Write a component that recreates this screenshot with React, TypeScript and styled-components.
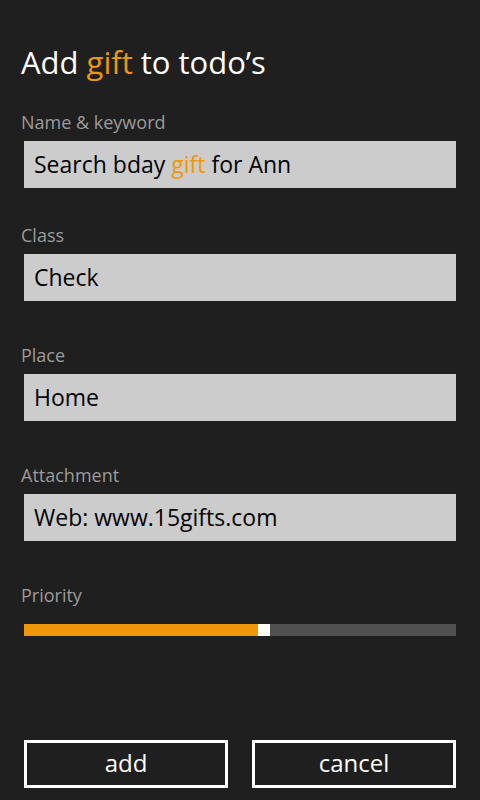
import React from 'react';
import styled, { createGlobalStyle } from 'styled-components';

const GlobalStyle = createGlobalStyle`
  html, body {
    margin: 0;
    padding: 0;
    background: #1f1f1f;
  }
  body {
    font-family: "Open Sans", "Noto Sans", sans-serif;
  }
`;

const Page = styled.div`
  width: 480px;
  height: 800px;
  box-sizing: border-box;
  background: #1f1f1f;
  padding: 44px 24px 12px;
  display: flex;
  flex-direction: column;
`;

const Title = styled.h1`
  margin: 0 0 0 -3px;
  font-size: 31px;
  line-height: 36px;
  font-weight: 400;
  color: #ffffff;
`;

const Accent = styled.span`
  color: #f09609;
`;

const Field = styled.div<{ $top: number }>`
  display: flex;
  flex-direction: column;
  margin-top: ${props => props.$top}px;
`;

const Label = styled.div`
  margin-left: -3px;
  font-size: 18px;
  line-height: 22px;
  color: #9b9b9b;
`;

const Input = styled.div`
  margin-top: 8px;
  height: 47px;
  box-sizing: border-box;
  background: #cccccc;
  padding: 0 10px;
  font-size: 23px;
  line-height: 46px;
  color: #000000;
  white-space: nowrap;
`;

const Slider = styled.div`
  margin-top: 18px;
  height: 12px;
  display: flex;
  background: #505050;
`;

const SliderFill = styled.div`
  background: #f09609;
`;

const SliderThumb = styled.div`
  width: 12px;
  background: #ffffff;
`;

const Buttons = styled.div`
  margin-top: auto;
  display: grid;
  grid-template-columns: 1fr 1fr;
  gap: 24px;
`;

const Button = styled.button`
  height: 48px;
  box-sizing: border-box;
  border: 3px solid #ffffff;
  background: transparent;
  color: #ffffff;
  font-family: "Open Sans", "Noto Sans", sans-serif;
  font-size: 24px;
  line-height: 1;
  padding: 0 0 3px;
  cursor: pointer;
`;

const fields = [
  { label: 'Class', value: 'Check' },
  { label: 'Place', value: 'Home' },
  { label: 'Attachment', value: 'Web: www.15gifts.com' },
];

const App: React.FC = () => {
  const priority = 234;
  return (
    <>
      <GlobalStyle />
      <Page>
        <Title>Add <Accent>gift</Accent> to todo’s</Title>
        <Field $top={31}>
          <Label>Name &amp; keyword</Label>
          <Input>Search bday <Accent>gift</Accent> for Ann</Input>
        </Field>
        {fields.map((f, i) => (
          <Field key={f.label} $top={i === 0 ? 36 : 43}>
            <Label>{f.label}</Label>
            <Input>{f.value}</Input>
          </Field>
        ))}
        <Field $top={43}>
          <Label>Priority</Label>
          <Slider>
            <SliderFill style={{ width: priority }} />
            <SliderThumb />
          </Slider>
        </Field>
        <Buttons>
          <Button>add</Button>
          <Button>cancel</Button>
        </Buttons>
      </Page>
    </>
  );
};

export default App;
